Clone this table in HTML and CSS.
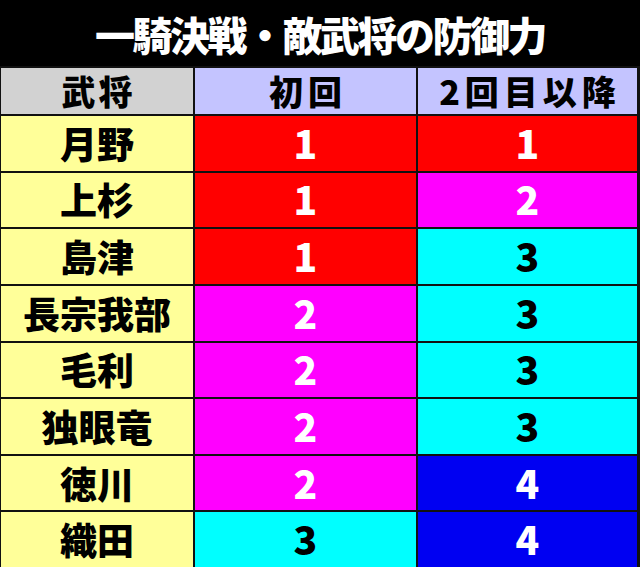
FILE: index.html
```html
<!DOCTYPE html>
<html lang="ja">
<head>
<meta charset="utf-8">
<title>一騎決戦・敵武将の防御力</title>
<link rel="stylesheet" href="styles.css">
</head>
<body>
<div class="page">
  <h1 class="title">一騎決戦・敵武将の防御力</h1>
  <div class="grid">
    <div class="cell head name-head">武将</div>
    <div class="cell head">初回</div>
    <div class="cell head">2回目以降</div>

    <div class="cell name">月野</div>
    <div class="cell num red">1</div>
    <div class="cell num red">1</div>

    <div class="cell name">上杉</div>
    <div class="cell num red">1</div>
    <div class="cell num magenta">2</div>

    <div class="cell name">島津</div>
    <div class="cell num red">1</div>
    <div class="cell num cyan">3</div>

    <div class="cell name">長宗我部</div>
    <div class="cell num magenta">2</div>
    <div class="cell num cyan">3</div>

    <div class="cell name">毛利</div>
    <div class="cell num magenta">2</div>
    <div class="cell num cyan">3</div>

    <div class="cell name">独眼竜</div>
    <div class="cell num magenta">2</div>
    <div class="cell num cyan">3</div>

    <div class="cell name">徳川</div>
    <div class="cell num magenta">2</div>
    <div class="cell num blue">4</div>

    <div class="cell name">織田</div>
    <div class="cell num cyan">3</div>
    <div class="cell num blue">4</div>
  </div>
</div>
</body>
</html>
```

FILE: styles.css
```css
html, body {
  margin: 0;
  padding: 0;
  background: #000;
}
.page {
  width: 640px;
  height: 567px;
  display: flex;
  flex-direction: column;
  background: #000;
  font-family: "Noto Sans CJK JP", "Noto Sans", sans-serif;
  font-weight: 900;
}
.title {
  margin: 0;
  height: 66px;
  display: flex;
  align-items: center;
  justify-content: center;
  color: #fff;
  font-size: 40px;
  font-weight: 900;
  letter-spacing: -2.5px;
  line-height: 1;
  padding-top: 2px;
  box-sizing: border-box;
}
.grid {
  flex: 1;
  display: grid;
  grid-template-columns: 192px 221px 219px;
  grid-template-rows: 46px repeat(8, 1fr);
  gap: 2px;
  padding: 2px 3px 0 1px;
  background: #111;
}
.cell {
  display: flex;
  align-items: center;
  justify-content: center;
  line-height: 1;
}
.head {
  background: #c4c4ff;
  color: #000;
  font-size: 34px;
  letter-spacing: 5px;
  padding-left: 5px;
}
.name-head {
  background: #d2d2d2;
  letter-spacing: 3px;
  padding-left: 3px;
}
.name {
  background: #ffff99;
  color: #000;
  font-size: 37px;
}
.num {
  font-size: 39px;
  color: #fff;
  font-weight: 800;
  padding-bottom: 2px;
}
.red { background: #ff0000; }
.magenta { background: #ff00ff; }
.cyan { background: #00ffff; color: #000; }
.blue { background: #0000f2; }
```
